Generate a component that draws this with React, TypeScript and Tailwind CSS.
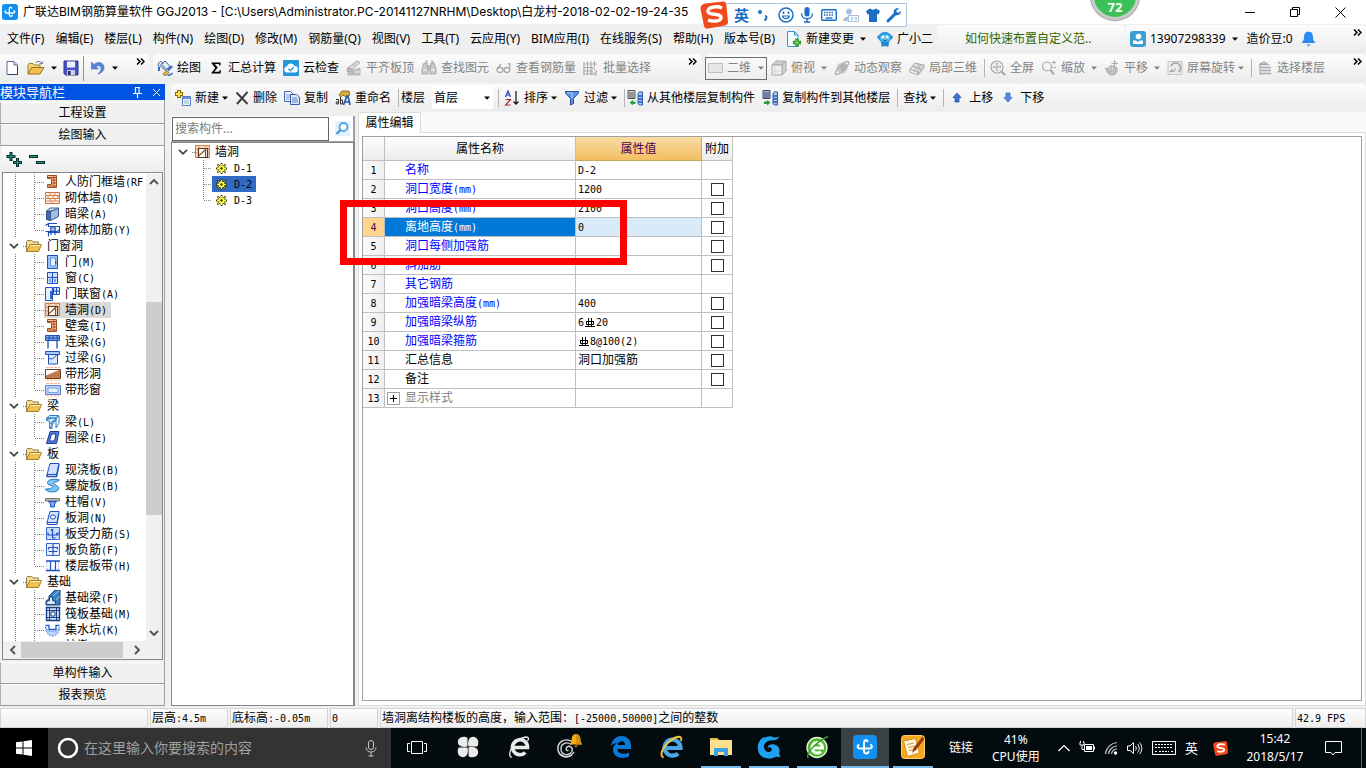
import React from "react";

type Kids = { children?: React.ReactNode };

/* ---------- small text and drawing helpers ---------- */

/** Song-style interface text: full-width CJK glyphs with half-width Latin runs. */
function Song({ text }: { text: string }) {
  return (
    <span className="whitespace-pre">
      {text.split(/([\x20-\x7e]+)/).map((part, i) =>
        /^[\x20-\x7e]+$/.test(part) ? (
          <span key={i} className="font-['DejaVu_Sans_Mono',monospace] text-[10px]">
            {part}
          </span>
        ) : (
          part
        ),
      )}
    </span>
  );
}

function Svg({ children, w = 16, h = 16, box, className = "" }: Kids & { w?: number; h?: number; box?: string; className?: string }) {
  return (
    <svg width={w} height={h} viewBox={box ?? `0 0 ${w} ${h}`} className={`shrink-0 ${className}`} fill="none" aria-hidden="true">
      {children}
    </svg>
  );
}

function Caret({ className = "" }: { className?: string }) {
  return (
    <Svg w={6} h={4} className={className}>
      <path d="M0 0.5h6L3 3.8z" fill="currentColor" />
    </Svg>
  );
}

function More() {
  return (
    <button type="button" aria-label="更多" className="mt-1 mr-1 flex self-start text-black">
      <Svg w={9} h={7}>
        <path d="M1 .5l3 3-3 3M5 .5l3 3-3 3" stroke="#000" strokeWidth="1.500" />
      </Svg>
    </button>
  );
}

function Sep({ tight = false }: { tight?: boolean }) {
  return <span className={`h-[18px] w-px shrink-0 bg-[#b4b4b4] ${tight ? "-mr-[5px]" : "-mr-0.5"}`} />;
}

function Group({ children, className = "" }: Kids & { className?: string }) {
  return (
    <div className={`flex items-center rounded-sm bg-linear-to-b from-[#fcfcfc] to-[#ececec] ${className}`}>{children}</div>
  );
}

function Tool({ icon, label, off = false, arrow }: { icon?: React.ReactNode; label: string; off?: boolean; arrow?: "tight" | "split" }) {
  return (
    <button type="button" className={`flex shrink-0 items-center whitespace-nowrap ${off ? "text-[#838383]" : "text-black"}`}>
      {icon && <span className="mr-1 flex">{icon}</span>}
      {label}
      {arrow && <Caret className={arrow === "tight" ? "ml-[3px]" : "ml-1.5"} />}
    </button>
  );
}

/* ---------- toolbar icons ---------- */

const G = "#a9a9a9";
const L = "#dcdcdc";

const NewDoc = (
  <Svg>
    <path d="M3 1.500h7l3.500 3.500v9.500H3z" fill="#fff" stroke="#5a6b8c" />
    <path d="M10 1.500v3.500h3.500" fill="#cfdcf0" stroke="#5a6b8c" />
    <path d="M13.500 6v8.500H4" stroke="#26436f" />
  </Svg>
);
const OpenDoc = (
  <Svg w={18}>
    <path d="M1 14V4.500l1-1h4l1 1.500h6v3" fill="#f5d77c" stroke="#a67c1e" />
    <path d="M1 14l3.500-6.500H17L13 14z" fill="#f2c14b" stroke="#9a7019" />
    <path d="M9 2.500c3-2 5-1 6 1.500m0 0l1-2.500M15 4l-2.500-.5" stroke="#5f7286" />
  </Svg>
);
const Save = (
  <Svg>
    <path d="M1 1h14v14H2.500L1 13.500z" fill="#4a55c4" stroke="#2b348f" />
    <path d="M4 1.500h8v6H4z" fill="#eef1fb" />
    <path d="M4 10h8v5H4z" fill="#c9cde8" />
    <path d="M5 11h2.500v4H5z" fill="#23285f" />
  </Svg>
);
const Undo = (
  <Svg>
    <path d="M1.500 2v7h7L6 6.500c2.500-1.500 5-.8 5 1.700 0 2-1 3.800-3 5.800 4-1 6.200-3.500 6-7C13.600 2.500 8 1 4 4.500z" fill="#5b86d8" stroke="#3c64b8" strokeWidth=".6" />
  </Svg>
);
const Paint = (
  <Svg>
    <path d="M3 5.500L8 1l5 5.500-5 4z" fill="#e8eef5" stroke="#3d5878" />
    <path d="M3 5.500l5 5 2-1.700-5-5.200z" fill="#8fb2dc" />
    <path d="M1 6C1.500 1 4.500 0 6 4" stroke="#3d5878" />
    <path d="M2 6.500v4.500" stroke="#2f6fd0" strokeWidth="2" />
    <path d="M15 6l-4 4.500" stroke="#3771c8" strokeWidth="2.400" />
    <path d="M6 14l3.500-3.500 2.500 2L9 15.500c-1 .3-2.500-.2-3-1.500z" fill="#e3b446" stroke="#6d5420" strokeWidth=".7" />
    <path d="M10.500 15c2 .5 4-.5 5-2" stroke="#2f6fd0" strokeWidth="1.500" />
  </Svg>
);
const Sigma = (
  <Svg>
    <path d="M3.500 2.500h9v3h-1c-.3-1.300-.8-1.600-2-1.600H6.800L9.800 7.600 6.200 11.800h3.600c1.300 0 1.800-.5 2.200-1.800h1l-.5 3.500h-9v-.8L7.300 8 3.500 3.300z" fill="#000" />
  </Svg>
);
const Cloud = (
  <Svg>
    <rect width="16" height="16" rx="1" fill="#2496dc" />
    <path d="M4.500 12.500a3 3 0 01-.5-6 4 4 0 017.600-.4 3.200 3.200 0 01.2 6.400z" fill="#fff" />
    <path d="M5.500 8.800l2 2 3.200-3.800" stroke="#2496dc" strokeWidth="1.400" />
  </Svg>
);
const Flush = (
  <Svg>
    <path d="M1 8.500L11 1l3 1.500-7 6.500z" fill={L} stroke={G} />
    <path d="M7 4.500l3 2" stroke={G} />
    <path d="M1 9.500h6v2H1zM2 12h5v3H2z" fill="#c4c4c4" stroke={G} strokeWidth=".8" />
    <path d="M8 10l6-2v7H8z" fill="#c4c4c4" stroke={G} strokeWidth=".8" />
    <path d="M9 12h5" stroke="#eee" />
  </Svg>
);
const Binoc = (
  <Svg>
    <path d="M3 3h3l1 5v6H1V9zM10 3h3l2 6v5H9V8z" fill="#c9c9c9" stroke={G} />
    <path d="M7 6h2v4H7zM4 1h2v2M10 1h2v2" stroke={G} />
    <path d="M2 10h4M10 10h4" stroke="#fff" />
  </Svg>
);
const Glasses = (
  <Svg>
    <ellipse cx="4" cy="10" rx="3" ry="2.500" stroke={G} strokeWidth="1.300" />
    <ellipse cx="11" cy="10" rx="2.800" ry="2.500" stroke={G} strokeWidth="1.300" />
    <path d="M1 9l4-5M7 9.500h1.500M13.500 9L14 4l-2-.5" stroke={G} strokeWidth="1.300" />
  </Svg>
);
const Batch = (
  <Svg>
    <path d="M1 2v13M4.500 1v14M8 1v14M11.500 1v6M0 4h14M0 7.500h10M0 11h8M0 14h9" stroke={G} />
    <path d="M9 7l5 5-2 .3 1.500 2.700-1.500.5-1.200-2.500L9 14.500z" fill="#f4f4f4" stroke={G} />
  </Svg>
);
const Plane2d = (
  <Svg w={15}>
    <rect x=".5" y="3.500" width="14" height="9" fill="#e6e6e6" stroke="#c0c0c0" />
  </Svg>
);
const Cube = (
  <Svg>
    <path d="M1 5l4-4h10l-4 4zM11 5l4-4v10l-4 4z" fill="#cfcfcf" stroke={G} />
    <path d="M1 5h10v10H1z" fill="#eee" stroke={G} />
    <path d="M4 5v10M1 11h10" stroke="#d8d8d8" />
  </Svg>
);
const Orbit = (
  <Svg>
    <circle cx="8" cy="8" r="5.500" fill="#cecece" />
    <path d="M5 8l5-5 3 2-4 7z" fill="#b5b5b5" />
    <ellipse cx="8" cy="8" rx="9" ry="2.600" transform="rotate(-45 8 8)" stroke={G} strokeWidth="1.200" />
  </Svg>
);
const Local3d = (
  <Svg>
    <path d="M1 9l5-6 9 2-5 8z" fill="#e2e2e2" stroke={G} />
    <path d="M1 9v3l8 3v-2M15 5v3l-6 7M5 11l5-7M8 12l4-8M3 6l9 3" stroke={G} />
  </Svg>
);
const Full = (
  <Svg>
    <circle cx="7" cy="7" r="6" fill="#f3f3f3" stroke={G} strokeWidth="1.200" />
    <path d="M7 3v8M3 7h8M5.800 4.200L7 3l1.200 1.200M5.800 9.800L7 11l1.200-1.200M4.200 5.800L3 7l1.200 1.200M9.800 5.800L11 7 9.800 8.200" stroke={G} />
    <path d="M11.500 11.500L15 15" stroke={G} strokeWidth="2.200" />
  </Svg>
);
const Zoom = (
  <Svg>
    <circle cx="6" cy="6.500" r="4.500" fill="#f3f3f3" stroke={G} strokeWidth="1.200" />
    <path d="M9.500 10L13 14.500" stroke={G} strokeWidth="2.200" />
    <path d="M11 2.500h4M13 .5v4M11.500 7.500h3.500" stroke={G} />
  </Svg>
);
const Pan = (
  <Svg>
    <path d="M1.500 8l3 .5L6 6l4 0 3 2v3.500c-1 3-3 3.500-5 3.500-4 0-5-3-6.500-7z" fill="#bdbdbd" stroke={G} />
    <path d="M10.500.5v6M7.500 3.500h6M9.500 1.500l1-1 1 1M12.500 2.500l1 1-1 1" stroke={G} />
    <path d="M6 7v3M8.500 7v3" stroke="#dedede" />
  </Svg>
);
const Rotate = (
  <Svg>
    <path d="M1 1.500h14v13H1z" fill="#ebebeb" stroke="#c4c4c4" />
    <path d="M4 6a5 5 0 117.500 6" stroke={G} strokeWidth="1.800" />
    <path d="M2 12l3-3 3 3z" fill={G} />
    <path d="M8 8v3" stroke={G} />
  </Svg>
);
const Floors = (
  <Svg>
    <path d="M2 4.500L7 2l4 2.500zM3 7.500h11M3 10.500h11M3 13.500h11" fill={L} stroke={G} strokeWidth="1.300" />
    <path d="M3 4v11" stroke={G} />
  </Svg>
);
const AddItem = (
  <Svg>
    <path d="M4 0v8M0 4h8" stroke="#8a6b00" strokeWidth="4" />
    <path d="M4 1v6M1 4h6" stroke="#ffe04a" strokeWidth="2" />
    <path d="M7.500 6.500h8v9h-8z" fill="#eef4ff" stroke="#5d7fc4" />
    <path d="M8 7h7v2H8z" fill="#5d8ee0" />
    <path d="M9 11h5M9 13h5" stroke="#9db5e0" />
  </Svg>
);
const Cross = (
  <Svg w={14}>
    <path d="M1.500 2.500l11 11.500M12.500 2L2 14" stroke="#3c3c3c" strokeWidth="1.900" />
  </Svg>
);
const Copy = (
  <Svg>
    <path d="M.5 1.500h6L9 4v7.500H.5z" fill="#e8f0ff" stroke="#4668b0" />
    <path d="M2 5h5M2 7h5M2 9h3" stroke="#7f9bd4" />
    <path d="M6.500 4.500h6L15.500 7v7.500h-9z" fill="#dce8ff" stroke="#3a5ca8" />
    <path d="M8 8h5M8 10h6M8 12h6" stroke="#5f80c8" />
  </Svg>
);
const Rename = (
  <Svg>
    <path d="M4 5l3-4h7l1 4-4 2-3-2-2 2z" fill="#d9ad3c" stroke="#76591a" strokeWidth=".8" />
    <path d="M1 9.500h2.500V14H1.500L1 12h2.500M5.500 7v7h2v-4h-2" stroke="#333" />
    <path d="M8.500 15l3.500-9h1l2 9M10 12h4" stroke="#2957b8" strokeWidth="1.700" />
  </Svg>
);
const SortAz = (
  <Svg>
    <path d="M1.500 7L4 1l2.500 6M2.300 5h3.400" stroke="#2a3fa8" strokeWidth="1.200" />
    <path d="M1.500 9.500h5L1.500 15h5" stroke="#a82a2a" strokeWidth="1.200" />
    <path d="M12 1v13M9.500 11.500L12 14.200l2.500-2.700" stroke="#111" strokeWidth="1.200" />
  </Svg>
);
const Filter = (
  <Svg>
    <path d="M1.500 1.500h13v1.500L9.500 8.500v5L6.500 15V8.500L1.500 3z" fill="#5b93e6" stroke="#24509c" />
    <path d="M3 3h5v5" stroke="#b8d3fa" />
  </Svg>
);
const CopyFrom = (
  <Svg>
    <path d="M1 .5h7v8H1z" fill="#d6d6d6" stroke="#555" />
    <path d="M2 3h5M2 5h5M2 7h5" stroke="#555" />
    <path d="M15.500 2c-3-.5-4.500 0-4.500 2v9.500c0 1.500 2 1.500 4.500 1.500z" fill="#a8c6f0" stroke="#2a5cb4" />
    <path d="M11 6h4.500M11 9h4.500M11 12h4.500" stroke="#2a5cb4" strokeWidth="1.300" />
    <path d="M2.500 12.500L6 10v1.500h2.500V14H6v1.500z" fill="#25a03c" />
  </Svg>
);
const CopyTo = (
  <Svg>
    <path d="M1 .5h7v8H1z" fill="#a9b8d0" stroke="#35486c" />
    <path d="M2 3h5M2 5h5M2 7h5" stroke="#35486c" />
    <path d="M15.500 2c-3-.5-4.500 0-4.500 2v9.500c0 1.500 2 1.500 4.500 1.500z" fill="#a8c6f0" stroke="#2a5cb4" />
    <path d="M11 6h4.500M11 9h4.500M11 12h4.500" stroke="#2a5cb4" strokeWidth="1.300" />
    <path d="M8.500 12.500L5 10v1.500H2V14h3v1.500z" fill="#25a03c" />
  </Svg>
);
const Up = (
  <Svg>
    <path d="M8 3l4 4.500h-2V12H6V7.500H4z" fill="#3d72d8" stroke="#244ea0" strokeWidth=".8" />
  </Svg>
);
const Down = (
  <Svg>
    <path d="M8 12l4-4.500h-2V3H6v4.500H4z" fill="#5b8be8" stroke="#3a64b8" strokeWidth=".8" />
  </Svg>
);
const ChangeDoc = (
  <Svg>
    <path d="M1.500 .5h7L12 4v11.500H1.500z" fill="#f2faff" stroke="#3a96c8" />
    <path d="M8.500.5V4H12" stroke="#3a96c8" />
    <path d="M11 7.500v8M7 11.500h8" stroke="#2f9426" strokeWidth="3.400" />
    <path d="M11 9v5M8.500 11.500h5" stroke="#7ed957" strokeWidth="1.200" />
  </Svg>
);
const Mascot = (
  <Svg>
    <path d="M0 5.500L3 3.500v5L1 8zM16 5.500l-3-2v5l2-.5z" fill="#1f86d4" />
    <ellipse cx="8" cy="6.500" rx="6.300" ry="5.800" fill="#2a9ae4" />
    <path d="M4 11h8l-.5 4.500H9l-1-1-1 1H4.500z" fill="#1f86d4" />
    <ellipse cx="8" cy="7" rx="4.800" ry="3.600" fill="#6cc8f8" />
    <circle cx="5.800" cy="6" r="1.300" fill="#fff" />
    <circle cx="10.200" cy="6" r="1.300" fill="#fff" />
    <path d="M5.800 8.500c1 1.300 3.400 1.300 4.400 0" stroke="#0c4c80" />
  </Svg>
);

/* ---------- tree icons ---------- */

const B = "#1d4fc0";
const N = "#a24f1c";
const P = "#f9c9a8";

const treeIcons: Record<string, React.ReactNode> = {
  frame: (
    <>
      <path d="M2.500 1.500h9v12h-9v-3h4v-6h-4z" fill={P} stroke={N} />
      <path d="M9 2v11M3 3.500h8M7 6h4M7 9h4M3 12h8" stroke={N} />
    </>
  ),
  brick: (
    <>
      <path d="M.5 2.500h14v11H.5z" fill="#fff3ea" stroke="#d0703a" />
      <path d="M0 5.500h15M0 8.500h15M0 11h15M5 2v3.500M10 2v3.500M3 5.500v3M8 5.500v3M13 5.500v3M5 8.500V11M10 8.500V11M7 11v2.500" stroke="#d88452" />
    </>
  ),
  dark: (
    <>
      <path d="M1.500 5L5 2h9l-3 3z" fill="#c6d8f4" stroke="#3c5a8c" />
      <path d="M1.500 5.500h4v9l-4-1z" fill="#3f6cb0" stroke="#274a80" />
      <path d="M5.500 5.500l8-3v8l-8 4z" fill="#a3bde6" stroke="#3c5a8c" />
    </>
  ),
  rebar: (
    <>
      <path d="M.5 3.500l3-2v3h11v6h-11v4M4 1.500h8M6 4v9M10 4v9M.5 9.500h12l2-2" stroke={B} strokeWidth="1.200" />
      <path d="M6 6h4v3H6z" fill="#cfe0ff" stroke={B} />
    </>
  ),
  door: (
    <>
      <path d="M2.500 1.500h10v13h-10z" fill="#9cc4fb" stroke={B} />
      <path d="M5.500 4h5v8h-5z" fill="#e8f3ff" stroke="#5b90e0" />
      <path d="M10 8.500h1.500" stroke="#12327c" strokeWidth="1.500" />
    </>
  ),
  window: (
    <>
      <path d="M2.500 2.500h10v11h-10z" fill="#cfe3ff" stroke={B} />
      <path d="M7.500 2.500v11M2.500 7.500h10" stroke={B} />
      <path d="M4 9h2v3H4zM9 9h2v3H9z" fill="#6ba3f2" />
    </>
  ),
  doorwin: (
    <>
      <path d="M.5 1.500h7v13h-7z" fill="#e3f0ff" stroke={B} />
      <path d="M8.500 1.500h6v7h-6zM11.500 1.500v7M8.500 5h6" fill="#cfe3ff" stroke={B} />
      <path d="M5 5h2v8H5z" fill="#2f66d0" />
    </>
  ),
  hole: (
    <>
      <path d="M.5 1.500h14v12H.5z" fill="#fbd9c0" stroke="#cf7a48" />
      <path d="M1 5h14M1 9h14M4 1v3M11 1v3" stroke="#dd9468" />
      <path d="M3.500 4.500h9v9h-9z" fill="#fff" stroke="#5c3417" strokeWidth="1.200" />
      <path d="M4 11.500l3-2.500 4-4M10.500 5.500V13" stroke="#8a5026" strokeWidth="1.200" />
    </>
  ),
  beamT: (
    <>
      <path d="M.5 1.500h14v5H.5z" fill="#7fa9ee" stroke={B} />
      <path d="M4 2v4M8 2v4M12 2v4M0 4h15" stroke="#234fa8" />
      <path d="M3 7v7.500M12 7v7.500" stroke={B} strokeWidth="1.300" />
    </>
  ),
  beamO: (
    <>
      <path d="M.5 1.500h14v3H.5z" fill="#a9c8fa" stroke={B} />
      <path d="M3.500 4.500h9v9.500h-9z" fill="#dce9ff" stroke={B} />
      <path d="M3.500 8.500l4 .5 4-4" stroke={B} />
    </>
  ),
  stripHole: (
    <>
      <path d="M1 1.500h14M1 14h14" stroke="#f5b49a" strokeDasharray="3 1" />
      <path d="M.5 3.500h15v9H.5z" fill="#c07c50" stroke="#743d18" />
      <path d="M1 4h13L1 9.500z" fill="#fff" />
    </>
  ),
  stripWin: (
    <>
      <path d="M1 1.500h14M1 14h14" stroke="#f5b49a" strokeDasharray="3 1" />
      <path d="M.5 3.500h15v9H.5z" fill="#bcd4fb" stroke="#5b7fd8" />
      <path d="M3 6h10v4.500H3z" fill="#e9f2ff" stroke="#7f9fe4" />
    </>
  ),
  beam: (
    <>
      <path d="M1.500 4l3-2.500h9L11 4zM1.500 4H11v2.500l-4 1v7H4.500v-7l-3-1z" fill="#cfe8fb" stroke="#2e7fc4" />
      <path d="M2 6l4-2M5 14l5-7M5 10l6-5M11 4l3-2v7l-3 5z" stroke="#2e7fc4" />
    </>
  ),
  ring: (
    <>
      <path d="M5 1.500h9L11.500 13.500H1.500z" fill="#4f7fda" stroke="#173c96" />
      <path d="M6.500 4h4.500L9.500 11H4.500z" fill="#fff" stroke="#173c96" />
    </>
  ),
  slab: (
    <>
      <path d="M2 12.500v2h9.500l2.500-12" fill="none" stroke={B} strokeWidth="1.500" />
      <path d="M5 1.500h9L11.500 12.500H2z" fill="#cfe2ff" stroke={B} />
    </>
  ),
  spiral: (
    <path d="M14.500 2C8 .5 3 1.500 2.500 4.500 2 7.500 8 7 8 8.500S4 11 .5 11c1 3 9 4 12 1.500 4-4-3-5.500-4-7C8 4 11 4.500 14.500 2z" fill="#7cc7f2" stroke="#1d78c0" />
  ),
  cap: (
    <>
      <path d="M.5 4.500h14v2.500H.5z" fill="#b9b9b9" stroke="#777" />
      <path d="M3.500 7.500h8l-2 2.500v3h-4v-3z" fill="#7fa9ee" stroke={B} />
    </>
  ),
  slabHole: (
    <>
      <path d="M5 1.500h9L12 12.500H2z" fill="#cfe2ff" stroke={B} />
      <path d="M2 12.500v2h10l2-11" stroke={B} />
      <ellipse cx="8" cy="7" rx="2.500" ry="2" fill="#fff" stroke={B} />
    </>
  ),
  slabBar: (
    <>
      <path d="M1.500 1.500h13v12h-13z" fill="#c9ddff" stroke="#3566cc" />
      <path d="M7.500 3v9M7.500 3L6 4.500M7.500 12h3M3 6.500v2.500h10v-2L11 8" stroke={B} strokeWidth="1.200" />
    </>
  ),
  slabNeg: (
    <>
      <path d="M1.500 1.500h13v12h-13z" fill="#e6efff" stroke="#3566cc" />
      <path d="M8 2v11.500M3.500 5.500h9M3.500 9.500h9M3.500 5.500v2M12.500 5.500v2" stroke={B} strokeWidth="1.200" />
    </>
  ),
  strip: (
    <>
      <path d="M1 3h14M1 12.500h14" stroke={B} strokeWidth="1.500" />
      <path d="M5.500 3v9.500M10.500 3v9.500" stroke={B} strokeWidth="1.200" />
      <path d="M2 4v8M13.500 4v8" stroke="#8eaeea" strokeDasharray="1 1" />
    </>
  ),
  footBeam: (
    <>
      <path d="M1 15v-4l3-2V6l6-6h5v15z" fill="#3a7fc0" stroke="#14447c" />
      <path d="M1.500 14.500v-3l3-1V7h3v3.500l3 1v3z" fill="#dcecfb" stroke="#14447c" />
      <path d="M8 6l6-5M11 10l4-4" stroke="#a4cbee" />
    </>
  ),
  raft: (
    <>
      <path d="M1.500 1.500h13v13h-13z" fill="#cfe2ff" stroke="#173f84" strokeWidth="1.400" />
      <path d="M4.500 1v14M11.500 1v14M1 4.500h14M1 11.500h14" stroke="#173f84" />
      <path d="M6 6h4v4H6z" fill="#fff" stroke="#173f84" />
    </>
  ),
  pit: (
    <>
      <path d="M.5 3.500h3.500v4h7v-4h3.500" stroke="#1f5fc8" strokeWidth="1.300" />
      <path d="M.5 5c0 5 3 9 7 9s7-4 7-9l-3 4h-8z" fill="#b8d6fa" stroke="#4b86dc" strokeDasharray="2 1" />
    </>
  ),
};

const Folder = (
  <Svg>
    <path d="M.5 13.500v-10l1-1h4l1.500 1.500h5.500v3" fill="#f7dd8c" stroke="#8d8155" />
    <path d="M.5 13.500L4 6.500h11.500L12.500 13.500z" fill="#f0c34c" stroke="#a07e25" />
    <path d="M4.500 7.500h10" stroke="#fdf0bd" />
  </Svg>
);

/* ---------- module tree ---------- */

type Node = { t: string; icon?: string; last?: boolean; on?: boolean };

const modules: Node[] = [
  { t: "人防门框墙(RF", icon: "frame" },
  { t: "砌体墙(Q)", icon: "brick" },
  { t: "暗梁(A)", icon: "dark" },
  { t: "砌体加筋(Y)", icon: "rebar", last: true },
  { t: "门窗洞" },
  { t: "门(M)", icon: "door" },
  { t: "窗(C)", icon: "window" },
  { t: "门联窗(A)", icon: "doorwin" },
  { t: "墙洞(D)", icon: "hole", on: true },
  { t: "壁龛(I)", icon: "frame" },
  { t: "连梁(G)", icon: "beamT" },
  { t: "过梁(G)", icon: "beamO" },
  { t: "带形洞", icon: "stripHole" },
  { t: "带形窗", icon: "stripWin", last: true },
  { t: "梁" },
  { t: "梁(L)", icon: "beam" },
  { t: "圈梁(E)", icon: "ring", last: true },
  { t: "板" },
  { t: "现浇板(B)", icon: "slab" },
  { t: "螺旋板(B)", icon: "spiral" },
  { t: "柱帽(V)", icon: "cap" },
  { t: "板洞(N)", icon: "slabHole" },
  { t: "板受力筋(S)", icon: "slabBar" },
  { t: "板负筋(F)", icon: "slabNeg" },
  { t: "楼层板带(H)", icon: "strip", last: true },
  { t: "基础" },
  { t: "基础梁(F)", icon: "footBeam" },
  { t: "筏板基础(M)", icon: "raft" },
  { t: "集水坑(K)", icon: "pit" },
  { t: "柱墩(T)", icon: "cap" },
];

function Chevron() {
  return (
    <Svg w={10} h={6}>
      <path d="M1 .8l4 4 4-4" stroke="#404040" strokeWidth="1.700" />
    </Svg>
  );
}

function ModuleRow({ n }: { n: Node }) {
  if (!n.icon) {
    return (
      <li className="flex h-4 items-center">
        <button type="button" aria-label="折叠" className="ml-1.5 flex w-3.5 shrink-0">
          <Chevron />
        </button>
        <span className="w-[3px] border-t border-dotted border-[#808080]" />
        {Folder}
        <span className="ml-[5px]">
          <Song text={n.t} />
        </span>
      </li>
    );
  }
  return (
    <li className="flex h-4 items-center">
      <Svg w={41}>
        <path d={`M12.500 0v16M31.500 0v${n.last ? 8 : 16}M32 8.500h9`} stroke="#808080" strokeDasharray="1 1" />
      </Svg>
      <span className={`flex h-4 items-center pr-1 whitespace-nowrap ${n.on ? "bg-[#d9d9d9]" : ""}`}>
        <Svg className="mr-1 ml-px">{treeIcons[n.icon]}</Svg>
        <Song text={n.t} />
      </span>
    </li>
  );
}

function SideButton({ label }: { label: string }) {
  return (
    <button type="button" className="h-[22px] w-full shrink-0 border-b border-l border-t border-t-white border-b-[#9a9a9a] border-l-[#b0b0b0] bg-[#f0f0f0] leading-5 text-black">
      <Song text={label} />
    </button>
  );
}

function ScrollArrow({ d, label }: { d: string; label: string }) {
  return (
    <button type="button" aria-label={label} className="flex size-4 shrink-0 items-center justify-center">
      <Svg w={10} h={10}>
        <path d={d} stroke="#505050" strokeWidth="1.800" />
      </Svg>
    </button>
  );
}

function Sidebar() {
  return (
    <aside className="flex w-[165px] shrink-0 flex-col">
      <div className="flex h-4 shrink-0 items-center bg-[#0054e3] text-white">
        <span className="text-[13px] leading-4">模块导航栏</span>
        <button type="button" aria-label="固定" className="ml-auto">
          <Svg w={9} h={11}>
            <path d="M2.500 1v5M2 .5h5M6 1v5M0 6.500h9M4.500 7v4" stroke="#fff" strokeWidth="1.200" />
          </Svg>
        </button>
        <button type="button" aria-label="关闭" className="mr-1 ml-2.5">
          <Svg w={9} h={9}>
            <path d="M1 1l7 7M8 1L1 8" stroke="#fff" />
          </Svg>
        </button>
      </div>
      <div className="flex min-h-0 grow flex-col border-r border-[#a0a0a0] pt-0.5">
        <SideButton label="工程设置" />
        <SideButton label="绘图输入" />
        <div className="ml-0.5 flex h-[26px] shrink-0 items-center gap-1.5 bg-linear-to-b from-[#fdfdfd] to-[#ededed] pl-1">
          <button type="button" aria-label="全部展开">
            <Svg w={17}>
              <path d="M5 1v9M.5 5.500h9M11.500 7v9M7 11.500h9" stroke="#0c2c2c" strokeWidth="3" />
              <path d="M5 2v7M1.500 5.500h7M11.500 8v7M8 11.500h7" stroke="#12a08e" />
            </Svg>
          </button>
          <button type="button" aria-label="全部折叠">
            <Svg w={17}>
              <path d="M0 5.500h9M7 11.500h9" stroke="#0c2c2c" strokeWidth="3" />
              <path d="M1 5.500h7M8 11.500h7" stroke="#12a08e" />
            </Svg>
          </button>
        </div>
        <div className="mr-px ml-0.5 flex min-h-0 grow flex-col border border-[#828790] bg-white pt-px">
          <div className="flex min-h-0 grow">
            <ul className="min-w-0 grow overflow-hidden">
              {modules.map((n, i) => (
                <ModuleRow key={i} n={n} />
              ))}
            </ul>
            <div className="flex w-4 shrink-0 flex-col bg-[#f0f0f0]">
              <ScrollArrow d="M1 7l4-4 4 4" label="向上滚动" />
              <div className="h-[24%] shrink-0" />
              <div className="h-[213px] bg-[#cdcdcd]" />
              <div className="mt-auto">
                <ScrollArrow d="M1 3l4 4 4-4" label="向下滚动" />
              </div>
            </div>
          </div>
          <div className="flex h-[18px] shrink-0 items-center bg-[#f0f0f0] pl-0.5">
            <ScrollArrow d="M7 1L3 5l4 4" label="向左滚动" />
            <div className="h-4 w-[102px] bg-[#cdcdcd]" />
            <div className="ml-1.5">
              <ScrollArrow d="M3 1l4 4-4 4" label="向右滚动" />
            </div>
          </div>
        </div>
        <div className="h-0.5 shrink-0" />
        <SideButton label="单构件输入" />
        <SideButton label="报表预览" />
      </div>
    </aside>
  );
}

/* ---------- component list ---------- */

function Gear() {
  return (
    <Svg w={11} h={11} className="mr-[7px]">
      <path d="M5.500 0v11M0 5.500h11M1.500 1.500l8 8M9.500 1.500l-8 8" stroke="#3c3a00" strokeWidth="1.800" />
      <path d="M5.500 1v9M1 5.500h9M2.200 2.200l6.600 6.600M8.800 2.200L2.200 8.800" stroke="#ffff30" />
      <circle cx="5.500" cy="5.500" r="3" fill="#ffff30" />
      <circle cx="5.500" cy="5.500" r="1.200" fill="#3c3a00" />
    </Svg>
  );
}

function Components() {
  return (
    <section className="flex w-[184px] shrink-0 flex-col">
      <div className="mt-[5px] flex h-[26px] shrink-0 items-center border-r-2 border-b border-[#a0a0a0] bg-white">
        <label htmlFor="find" className="sr-only">
          搜索构件
        </label>
        <input
          id="find"
          placeholder="搜索构件..."
          className="ml-px h-6 w-[157px] border border-[#646464] bg-white px-0.5 text-xs text-black outline-none placeholder:text-[#7c7c7c]"
        />
        <button type="button" aria-label="搜索" className="ml-1.5">
          <Svg w={15} h={15}>
            <rect width="15" height="15" fill="#e2f2fd" />
            <circle cx="8.500" cy="6" r="4" fill="#fff" stroke="#4ba7e4" strokeWidth="1.800" />
            <path d="M5.500 9L1.500 13" stroke="#3c92d4" strokeWidth="2.200" />
          </Svg>
        </button>
      </div>
      <ul className="grow border-y border-r-2 border-l border-[#828790] bg-white pt-px">
        <li className="flex h-4 items-center">
          <button type="button" aria-label="折叠" className="mr-1 ml-1.5 flex">
            <Chevron />
          </button>
          <span className="w-[3px] border-t border-dotted border-[#808080]" />
          <Svg className="mr-1">{treeIcons.hole}</Svg>
          墙洞
        </li>
        {["D-1", "D-2", "D-3"].map((d, i) => (
          <li key={d} className="flex h-4 items-center">
            <Svg w={40}>
              <path d={`M31.500 0v${i === 2 ? 8 : 16}M32 8.500h8`} stroke="#808080" strokeDasharray="1 1" />
            </Svg>
            <span className={`flex h-4 items-center px-1 ${i === 1 ? "bg-[#316ac5]" : ""}`}>
              <Gear />
              <Song text={d} />
            </span>
          </li>
        ))}
      </ul>
    </section>
  );
}

/* ---------- property grid ---------- */

function Bar() {
  return (
    <Svg w={10} h={10} className="mx-px inline-block align-[-2px]">
      <path d="M3.500 0v8M6.500 0v8M0 8.500h10M1 3.500h8M1.500 3.500v3h7v-3" stroke="#000" />
    </Svg>
  );
}

type Row = { name: string; value?: React.ReactNode; box?: boolean; tone?: string };

const rows: Row[] = [
  { name: "名称", value: <Song text="D-2" /> },
  { name: "洞口宽度(mm)", value: <Song text="1200" />, box: true },
  { name: "洞口高度(mm)", value: <Song text="2100" />, box: true },
  { name: "离地高度(mm)", value: <Song text="0" />, box: true },
  { name: "洞口每侧加强筋", box: true },
  { name: "斜加筋", box: true },
  { name: "其它钢筋" },
  { name: "加强暗梁高度(mm)", value: <Song text="400" />, box: true },
  { name: "加强暗梁纵筋", value: <><Song text="6" /><Bar /><Song text="20" /></>, box: true },
  { name: "加强暗梁箍筋", value: <><Bar /><Song text="8@100(2)" /></>, box: true },
  { name: "汇总信息", value: <Song text="洞口加强筋" />, box: true, tone: "text-black" },
  { name: "备注", box: true, tone: "text-black" },
  { name: "显示样式", tone: "text-[#808080]" },
];

const cell = "h-[19px] border-r border-b border-[#bfbfbf] p-0 leading-none";

function Properties() {
  return (
    <section className="flex min-w-0 grow flex-col">
      <div className="mt-px flex h-[21px] shrink-0">
        <button type="button" className="w-[63px] border-t border-r border-l border-[#dcdcdc] bg-white text-black">
          属性编辑
        </button>
        <div className="grow border-b border-[#dcdcdc] bg-[#fafafa]" />
      </div>
      <div className="flex min-h-0 grow flex-col border-x border-b border-[#dcdcdc] bg-white px-[3px] pt-[3px] pb-1">
        <div className="grow border border-[#a0a0a0] bg-white">
          <table className="table-fixed border-separate border-spacing-0">
            <colgroup>
              <col className="w-[22px]" />
              <col className="w-[191px]" />
              <col className="w-[126px]" />
              <col className="w-[31px]" />
            </colgroup>
            <thead>
              <tr className="bg-linear-to-b from-[#fdfdfd] to-[#ececec]">
                <th className="h-6 border-r border-b border-[#bfbfbf] p-0" aria-label="序号" />
                <th className="border-r border-b border-[#bfbfbf] p-0 font-normal">属性名称</th>
                <th className="border-r border-b border-[#c9a860] bg-linear-to-b from-[#f9dca4] to-[#f2bf60] p-0 font-normal text-[#500050]">属性值</th>
                <th className="border-r border-b border-[#bfbfbf] p-0 font-normal whitespace-nowrap">附加</th>
              </tr>
            </thead>
            <tbody>
              {rows.map((r, i) => {
                const on = i === 3;
                return (
                  <tr key={r.name}>
                    <td className={`${cell} text-center ${on ? "bg-[#ffd58c] text-[#500050]" : "bg-linear-to-r from-[#fbfbfb] to-[#efefef]"}`}>
                      <Song text={String(i + 1)} />
                    </td>
                    <td className={`${cell} ${on ? "bg-[#0078d7] text-white" : r.tone ?? "text-[#0000ff]"}`}>
                      <span className="flex items-center">
                        {i === 12 ? (
                          <button type="button" aria-label="展开" className="mr-[5px] ml-0.5 flex size-[13px] items-center justify-center border border-[#a0a0a0] text-black">
                            <Svg w={7} h={7}>
                              <path d="M3.500 0v7M0 3.500h7" stroke="#000" />
                            </Svg>
                          </button>
                        ) : (
                          <span className="w-5" />
                        )}
                        <Song text={r.name} />
                      </span>
                    </td>
                    <td className={`${cell} pl-0.5 ${on ? "bg-[#d9eaf9]" : ""}`}>{r.value}</td>
                    <td className={cell}>
                      {r.box && (
                        <input
                          type="checkbox"
                          aria-label={`附加 ${r.name}`}
                          className="mx-auto block size-[13px] appearance-none border border-[#303030] bg-white"
                        />
                      )}
                    </td>
                  </tr>
                );
              })}
            </tbody>
          </table>
        </div>
      </div>
    </section>
  );
}

/* ---------- top area ---------- */

function AppLogo({ size = 16 }: { size?: number }) {
  return (
    <Svg w={size} h={size} box="0 0 24 24">
      <rect width="24" height="24" rx="4" fill="#1290f0" />
      <path
        d="M14.500 6.300C13.500 4.300 11 5 11 7.500V16c0 2.800 3.600 3.200 4.500.8M5.500 10c-1.800 1.500-.8 3.500 1.500 3.500h9.500c2.600 0 3.200-2.200 1.600-3.600"
        stroke="#fff"
        strokeWidth="2"
        strokeLinecap="round"
      />
    </Svg>
  );
}

function Sogou({ size }: { size: number }) {
  return (
    <Svg w={size} h={size} box="0 0 28 28">
      <path d="M5 2.500L23 .5c2 0 3 1 3.300 3L28 21c0 2-1 3-3 3.500L8 27.500c-2 .3-3.500-.5-4-2.500L.5 8C.3 5 2 3 5 2.500z" fill="#f04a1c" />
      <path d="M22 7c-5-2.500-14-1-14 3 0 5 13 1.500 13 6.500 0 4-8 4.500-13 2.500" stroke="#fff" strokeWidth="3.400" />
    </Svg>
  );
}

function TitleBar() {
  return (
    <header className="flex h-6 shrink-0 items-center bg-white pl-0.5">
      <AppLogo />
      <h1 className="ml-[5px] truncate font-['Inter','Noto_Sans_CJK_SC',sans-serif] text-xs leading-6 font-normal text-black">
        广联达BIM钢筋算量软件 GGJ2013 - [C:\Users\Administrator.PC-20141127NRHM\Desktop\白龙村-2018-02-02-19-24-35
      </h1>
      <div className="ml-auto flex items-center gap-[35px] pr-5">
        <button type="button" aria-label="最小化">
          <Svg w={10} h={10}>
            <path d="M0 5.500h10" stroke="#000" />
          </Svg>
        </button>
        <button type="button" aria-label="还原">
          <Svg w={10} h={10}>
            <path d="M.5 2.500h7v7h-7zM2.500 2V.5h7v7H8" stroke="#000" />
          </Svg>
        </button>
        <button type="button" aria-label="关闭窗口">
          <Svg w={11} h={11}>
            <path d="M.5.500l10 10M10.500.500l-10 10" stroke="#000" />
          </Svg>
        </button>
      </div>
    </header>
  );
}

function ImeBar() {
  const c = "#1a6fc4";
  return (
    <div className="absolute top-[3px] left-[715px] flex h-6 w-[192px] items-center justify-between border border-[#b0c4de] bg-white pr-1 pl-[18px]">
      <div className="absolute -top-[3px] -left-4">
        <Sogou size={28} />
      </div>
      <span className="text-[15px] font-bold text-[#1a6fc4]">英</span>
      <Svg>
        <circle cx="5" cy="5" r="2" fill={c} />
        <path d="M10 9c2 0 2 3-.5 4.500" stroke={c} strokeWidth="2" />
      </Svg>
      <Svg>
        <circle cx="8" cy="8" r="7" stroke={c} strokeWidth="1.500" />
        <path d="M4.500 9c1 3.500 6 3.500 7 0z" stroke={c} strokeWidth="1.200" />
        <path d="M5.500 4.500v2.500M10.500 4.500v2.500" stroke={c} strokeWidth="1.600" />
      </Svg>
      <Svg w={14}>
        <rect x="4.500" y="0" width="5" height="9.500" rx="2.500" fill={c} />
        <path d="M1.500 6.500c0 7 11 7 11 0M7 12v3M4 15h6" stroke={c} strokeWidth="1.400" />
      </Svg>
      <Svg>
        <rect x=".7" y="2.700" width="14.600" height="10.600" rx="1" stroke={c} strokeWidth="1.400" />
        <path d="M3 5.500h10M3 8h10" stroke={c} strokeWidth="1.400" strokeDasharray="1.500 1" />
        <path d="M4.500 11h7" stroke={c} strokeWidth="1.400" />
      </Svg>
      <Svg>
        <circle cx="6" cy="4.500" r="3" fill="#a9c1dc" />
        <path d="M0 14c0-6 12-6 12 0z" fill="#a9c1dc" />
        <rect x="5.500" y="8.500" width="10" height="6" fill="#fff" stroke="#a9c1dc" />
        <path d="M7.500 10.500h2v2h-2M11.500 10.500h2v2h-2" stroke="#a9c1dc" />
      </Svg>
      <Svg w={14}>
        <path d="M4 1.500c1.500 1.500 4.500 1.500 6 0L14 4l-1.500 3.500-1.500-.5v8H3V7l-1.500.5L0 4z" fill={c} />
      </Svg>
      <Svg>
        <path d="M2 14l7-7" stroke={c} strokeWidth="3" strokeLinecap="round" />
        <path d="M13 1.500c-4-1-6 2-5 5.500 2 2.500 7 1.500 7-3l-3 2-2-2z" fill={c} />
      </Svg>
    </div>
  );
}

const menus = ["文件(F)", "编辑(E)", "楼层(L)", "构件(N)", "绘图(D)", "修改(M)", "钢筋量(Q)", "视图(V)", "工具(T)", "云应用(Y)", "BIM应用(I)", "在线服务(S)", "帮助(H)", "版本号(B)"];

function MenuBar() {
  return (
    <nav className="flex h-[29px] shrink-0 items-center">
      <div className="flex w-[937px] shrink-0 items-center gap-[11px] pl-[7px] whitespace-nowrap">
        {menus.map((m) => (
          <button key={m} type="button">
            {m}
          </button>
        ))}
        <Tool icon={ChangeDoc} label="新建变更" arrow="split" />
        <Tool icon={Mascot} label="广小二" />
      </div>
      <Group className="h-7 w-[188px] shrink-0 pl-7">
        <a href="#tips" className="text-[#336600]">
          如何快速布置自定义范..
        </a>
      </Group>
      <Group className="ml-px h-7 grow pl-1">
        <Tool
          icon={
            <Svg>
              <rect width="16" height="16" rx="3" fill="#3a9fd0" />
              <circle cx="8.500" cy="5.500" r="2.800" fill="#fff" />
              <path d="M3 13V9.500h3l2 1.500 2-1.500h3V13z" fill="#fff" />
            </Svg>
          }
          label="13907298339"
          arrow="split"
        />
        <a href="#beans" className="mr-2 ml-[9px]">
          造价豆:0
        </a>
        <Svg w={15}>
          <path d="M7.500.5c-3.500 0-4.500 3-4.500 6 0 2.500-1 3.500-2.500 5.500h14C13 10 12 9 12 6.500c0-3-1-6-4.500-6z" fill="#2b8af4" />
          <path d="M5.500 13.500h4L7.500 15.500z" fill="#2b8af4" />
        </Svg>
        <span className="ml-auto flex self-stretch">
          <More />
        </span>
      </Group>
    </nav>
  );
}

function MainToolbar() {
  return (
    <div className="mt-px flex h-7 shrink-0 gap-1">
      <Group className="w-[149px] shrink-0 pl-1">
        <button type="button" aria-label="新建">{NewDoc}</button>
        <button type="button" aria-label="打开" className="ml-[7px] flex items-center gap-1.5">
          {OpenDoc}
          <Caret />
        </button>
        <button type="button" aria-label="保存" className="mr-1 ml-1.5">{Save}</button>
        <span className="h-[25px] w-px bg-[#909090]" />
        <button type="button" aria-label="撤销" className="ml-1.5 flex items-center gap-1.5">
          {Undo}
          <Caret />
        </button>
        <span className="ml-auto flex self-stretch">
          <More />
        </span>
      </Group>
      <Group className="w-[548px] shrink-0 gap-[7px] pl-1">
        <Tool icon={Paint} label="绘图" />
        <Tool icon={Sigma} label="汇总计算" />
        <Tool icon={Cloud} label="云检查" />
        <Tool off icon={Flush} label="平齐板顶" />
        <Tool off icon={Binoc} label="查找图元" />
        <Tool off icon={Glasses} label="查看钢筋量" />
        <Tool off icon={Batch} label="批量选择" />
        <span className="ml-auto flex self-stretch">
          <More />
        </span>
      </Group>
      <Group className="min-w-0 grow gap-[7px]">
        <label className="-mr-[3px] flex h-[23px] w-[62px] shrink-0 items-center border border-[#6e6e6e] pl-0.5 text-[#838383]">
          {Plane2d}
          <select aria-label="视图模式" className="ml-1 w-[31px] appearance-none outline-none">
            <option>二维</option>
          </select>
          <Caret className="shrink-0" />
        </label>
        <Tool off icon={Cube} label="俯视" arrow="split" />
        <Tool off icon={Orbit} label="动态观察" />
        <Tool off icon={Local3d} label="局部三维" />
        <Sep />
        <Tool off icon={Full} label="全屏" />
        <Tool off icon={Zoom} label="缩放" arrow="split" />
        <Tool off icon={Pan} label="平移" arrow="split" />
        <Tool off icon={Rotate} label="屏幕旋转" arrow="tight" />
        <Sep />
        <Tool off icon={Floors} label="选择楼层" />
        <span className="ml-auto flex self-stretch">
          <More />
        </span>
      </Group>
    </div>
  );
}

function EditToolbar() {
  return (
    <Group className="h-[27px] shrink-0 gap-[7px] pl-1">
      <Tool icon={AddItem} label="新建" arrow="tight" />
      <Tool icon={Cross} label="删除" />
      <Tool icon={Copy} label="复制" />
      <Tool icon={Rename} label="重命名" />
      <Sep tight />
      <label htmlFor="floor" className="shrink-0">
        楼层
      </label>
      <span className="-mr-0.5 flex h-[23px] w-[61px] shrink-0 items-center bg-white pl-0.5">
        <select id="floor" className="w-[50px] appearance-none outline-none">
          <option>首层</option>
        </select>
        <Caret className="shrink-0" />
      </span>
      <Sep />
      <Tool icon={SortAz} label="排序" arrow="tight" />
      <Tool icon={Filter} label="过滤" arrow="tight" />
      <Sep tight />
      <Tool icon={CopyFrom} label="从其他楼层复制构件" />
      <Tool icon={CopyTo} label="复制构件到其他楼层" />
      <Sep />
      <Tool label="查找" arrow="tight" />
      <Sep />
      <Tool icon={Up} label="上移" />
      <Tool icon={Down} label="下移" />
    </Group>
  );
}

/* ---------- status bar and taskbar ---------- */

function Status({ text, className }: { text: string; className: string }) {
  return (
    <div className={`flex items-center overflow-hidden border border-[#d4d4d4] bg-linear-to-b from-[#fefefe] to-[#ededed] pl-px ${className}`}>
      <Song text={text} />
    </div>
  );
}

function StatusBar() {
  return (
    <footer className="mt-0.5 flex h-5 shrink-0 gap-0.5">
      <Status text="" className="w-[148px] shrink-0" />
      <Status text="层高:4.5m" className="w-[78px] shrink-0" />
      <Status text="底标高:-0.05m" className="w-[98px] shrink-0" />
      <Status text="0" className="w-12 shrink-0" />
      <Status text="墙洞离结构楼板的高度，输入范围：[-25000,50000]之间的整数" className="grow pl-0.5" />
      <Status text="42.9 FPS" className="w-[71px] shrink-0" />
    </footer>
  );
}

function Pin({ label, children, wide = false, run = false, on = false }: Kids & { label: string; wide?: boolean; run?: boolean; on?: boolean }) {
  return (
    <button
      type="button"
      aria-label={label}
      className={`flex shrink-0 flex-col items-center justify-end ${wide ? "w-[51px]" : "w-12"} ${on ? "bg-[#3a4246]" : ""}`}
    >
      <span className="flex grow items-center">{children}</span>
      <span className={`h-0.5 shrink-0 ${on ? "w-full" : "w-10"} ${run ? "bg-[#76b9ed]" : ""}`} />
    </button>
  );
}

function Taskbar() {
  return (
    <footer className="flex h-10 shrink-0 bg-[#030b0e] text-white">
      <button type="button" aria-label="开始" className="flex w-12 shrink-0 items-center justify-center bg-black">
        <Svg w={16}>
          <path d="M0 2.300L6.500 1.400v6.100H0zM7.500 1.200L16 0v7.500H7.500zM0 8.500h6.500v6.100L0 13.700zM7.500 8.500H16V16l-8.500-1.200z" fill="#fff" />
        </Svg>
      </button>
      <label className="flex w-[343px] shrink-0 items-center bg-[#333] pr-3 pl-[9px]">
        <Svg w={22} h={22}>
          <circle cx="11" cy="11" r="9" stroke="#fff" strokeWidth="2.600" />
        </Svg>
        <input
          aria-label="搜索"
          placeholder="在这里输入你要搜索的内容"
          className="ml-[5px] min-w-0 grow bg-transparent text-sm text-white outline-none placeholder:text-[#a0a0a0]"
        />
        <Svg w={16} h={18}>
          <rect x="5.500" y="1.500" width="5" height="9" rx="2.500" stroke="#c8c8c8" />
          <path d="M3 8.500c0 6 10 6 10 0M8 13v4M5.500 17h5" stroke="#c8c8c8" />
        </Svg>
      </label>
      <Pin wide label="任务视图">
        <Svg w={20} h={16}>
          <path d="M4.500 2.500h11v12h-11zM3 4.500H.5v8H3M17 4.500h2.500v8H17" stroke="#fff" />
        </Svg>
      </Pin>
      <Pin wide label="风扇">
        <Svg w={22} h={22}>
          <path d="M10.500 10.500C4 12 0 9 1 4.500 2 0 9 0 10.500 2z" fill="#ebebeb" />
          <path d="M11.500 10.500C10 4 13 0 17.500 1c4.500 1 4.500 8 2.500 9.500z" fill="#ebebeb" />
          <path d="M11.500 11.500C18 10 22 13 21 17.500c-1 4.500-8 4.500-9.500 2.500z" fill="#ebebeb" />
          <path d="M10.500 11.500C12 18 9 22 4.500 21c-4.500-1-4.500-8-2.500-9.500z" fill="#ebebeb" />
        </Svg>
      </Pin>
      <Pin wide label="浏览器">
        <Svg w={22} h={24}>
          <path d="M5 12.500h14.500a7.500 7.500 0 10-2.200 5" stroke="#ececec" strokeWidth="3.600" />
          <path d="M4 22.500c-7-2 3-19 14-20.500 3 0 3 1.500 1.500 4" stroke="#ececec" strokeWidth="1.300" />
        </Svg>
      </Pin>
      <Pin wide label="通知助手">
        <Svg w={28} h={28}>
          <path d="M16 8.500C8 4 1 10 2 17c1.500 8 12 9 16 2" stroke="#ddd" strokeWidth="1.400" />
          <path d="M15.500 11.500C10 8 4.500 11 5 16.500c.5 6 8.500 7 11 2 1.500-4-2.500-6.500-5-4.500-2 2-.5 4 1.500 3.500M4.500 21c3 4 9 3.500 11.500 1" stroke="#ddd" strokeWidth="1.300" />
          <path d="M20 1c-4 0-4.500 4-4.500 7L14 11.500h12L24.500 8C24.500 5 24 1 20 1z" fill="#f0b015" />
          <path d="M20 1v10.500h6L24.500 8C24.500 5 24 1 20 1zM18 12.500h4l-2 2z" fill="#d3920a" />
        </Svg>
      </Pin>
      <Pin wide label="Edge">
        <Svg w={20} h={22}>
          <path d="M0 10C1 3 6 0 10.500 0 16 0 20 4 20 9.500V13H6.500c0 5 7 6 11.500 3.500v4C12 23.500 2 22 2 13.500 2 10.500 4 8 6.500 7 3.500 7 1 8.500 0 10zM6.700 9h7.500c0-5-7-5-7.500 0z" fill="#0a78d7" fillRule="evenodd" />
        </Svg>
      </Pin>
      <Pin wide label="Internet Explorer">
        <Svg w={24} h={24}>
          <path d="M6 13h14.500a8 8 0 10-2.400 5.400" stroke="#4aa6e8" strokeWidth="4.200" />
          <path d="M3.500 22.500C-3 20 7 5 17 2c4-1 5 1 4 4" stroke="#f4c430" strokeWidth="1.900" />
        </Svg>
      </Pin>
      <Pin run label="文件资源管理器">
        <Svg w={22} h={20}>
          <path d="M0 1h7l2 2h13v15H0z" fill="#fbe08f" />
          <path d="M0 1h7l2 2H0z" fill="#e9b93c" />
          <path d="M4 11h14v8h-4v-4h-6v4H4z" fill="#3ca3e0" />
        </Svg>
      </Pin>
      <Pin run label="浏览器 G">
        <Svg w={24} h={24}>
          <path
            d="M22.500 1c-1.500 4.500-5 4-8 4.300C9 6 6.500 9 7 12.500c.5 3.500 3.500 5 6 4.200 2-.7 2.500-3 .5-4.200-1-.5-2.500-.3-3 .2.500-3 4-4 7-3.200 4.500 1 6 5.500 4.500 9l1.500 3.500-4.500-.2C13 25 4 24 1.500 17-1 10 3 3 8 1.500l-1 2C10 1 13 .5 16 2c2.500 1 5 .5 6.500-1z"
            fill="#1fa0f0"
          />
        </Svg>
      </Pin>
      <Pin run label="360 浏览器">
        <Svg w={24} h={24}>
          <circle cx="12" cy="12.500" r="10" fill="#4fba2f" stroke="#e8f7e2" strokeWidth="1.300" />
          <path d="M7 13h10.500a5.300 5.300 0 10-1.600 3.600" stroke="#fff" strokeWidth="3" />
          <path d="M3 23C1 17 14 5 23 1.500" stroke="#3f9e22" strokeWidth="1.500" />
        </Svg>
      </Pin>
      <Pin run on label="广联达">
        <AppLogo size={24} />
      </Pin>
      <Pin run label="笔记">
        <Svg w={24} h={24}>
          <rect x=".5" y=".5" width="23" height="23" rx="3" fill="#f6a91c" stroke="#ffcf66" />
          <path d="M2.500 6l12-2.500L18.500 18l-12 3.500z" fill="#fff7e0" stroke="#d8901c" />
          <path d="M6 9.500l7-1.500M7 12.500l7-1.500M8 15.500l5-1" stroke="#c9963c" />
          <path d="M21.500 1.500L12.500 13l-1.500 5 4-3L23.500 4z" fill="#9c3b12" />
        </Svg>
      </Pin>
      <div className="ml-3 flex shrink-0 items-center text-xs">链接</div>
      <div className="ml-[19px] flex shrink-0 flex-col justify-center text-center text-xs leading-[17px]">
        <span>41%</span>
        <span>CPU使用</span>
      </div>
      <div className="ml-auto flex shrink-0 items-center gap-[9px]">
        <Svg w={12} h={8}>
          <path d="M.5 7L6 1.500 11.500 7" stroke="#fff" strokeWidth="1.200" />
        </Svg>
        <Svg w={16}>
          <path d="M5.500 4.500h9v7h-9zM15.500 6.500v3" stroke="#fff" />
          <path d="M7 6h6v4H7z" fill="#fff" />
          <path d="M1 2v3h4V2M3 5v4.500h2M1.500 1v1.500M4.500 1v1.500" stroke="#fff" />
        </Svg>
        <Svg w={14}>
          <path d="M1.500 14C2 8 7 3 13 2.500M4.500 14c.5-4 4-8 8.500-8M7.500 14c.5-2.500 2.500-5 5.500-5" stroke="#c8c8c8" strokeWidth="1.200" />
          <circle cx="11.500" cy="13" r="1.700" fill="#fff" />
        </Svg>
        <Svg w={16}>
          <path d="M.5 6v4.500H3l3.500 3v-11L3 6z" stroke="#fff" />
          <path d="M8.500 6c1 1 1 3.500 0 4.500M10.500 4c2.200 2 2.200 6.500 0 8.500M12.500 2.500c3 3 3 8.500 0 11.500" stroke="#fff" />
        </Svg>
        <Svg w={24} h={14}>
          <path d="M.5.500h23v13H.5z" stroke="#fff" />
          <path d="M3 3.500h18M3 6.500h18M3 10.500h2M7 10.500h10M19 10.500h2" stroke="#fff" strokeDasharray="2 1" />
        </Svg>
        <span className="text-[13px]">英</span>
        <span className="ml-1.5">
          <Sogou size={15} />
        </span>
      </div>
      <div className="ml-4 flex w-[62px] shrink-0 flex-col items-center justify-center text-xs leading-[18px]">
        <span>15:42</span>
        <span>2018/5/17</span>
      </div>
      <button type="button" aria-label="操作中心" className="flex w-[55px] shrink-0 items-center justify-center">
        <Svg w={17} h={17}>
          <path d="M.5 1.500h16v11H10l-2 2.500-2-2.500H.5z" stroke="#fff" />
        </Svg>
      </button>
      <span className="mr-1 w-px shrink-0 bg-[#5a6265]" />
    </footer>
  );
}

export default function App() {
  return (
    <div className="relative flex h-screen min-h-[600px] flex-col overflow-hidden bg-[#f0f0f0] font-['Noto_Sans','Noto_Sans_CJK_SC',sans-serif] text-xs leading-4 text-black">
      <TitleBar />
      <MenuBar />
      <MainToolbar />
      <div className="mt-0.5 flex min-h-0 grow gap-1.5">
        <Sidebar />
        <main className="flex min-w-0 grow flex-col">
          <EditToolbar />
          <div className="flex min-h-0 grow gap-[3px]">
            <Components />
            <Properties />
          </div>
        </main>
      </div>
      <StatusBar />
      <Taskbar />

      <ImeBar />
      <div className="absolute -top-7 left-[1091px] flex size-12 items-end justify-center rounded-full border-[3px] border-[#c9ccca] bg-[#3cc05a] pb-0.5 text-[13px] font-bold text-white shadow ring-1 ring-[#a8a8a8]">
        <span className="leading-4">72</span>
      </div>
      <div className="pointer-events-none absolute top-[200px] left-[340px] h-[65px] w-[287px] border-[7px] border-[#fe0000]" />
    </div>
  );
}
